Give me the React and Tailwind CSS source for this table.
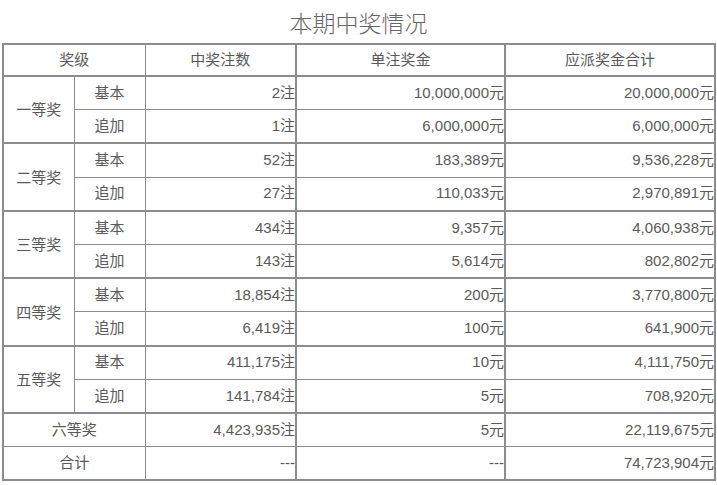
import React from "react";

const groups = [
  { name: "一等奖", rows: [["基本", "2注", "10,000,000元", "20,000,000元"], ["追加", "1注", "6,000,000元", "6,000,000元"]] },
  { name: "二等奖", rows: [["基本", "52注", "183,389元", "9,536,228元"], ["追加", "27注", "110,033元", "2,970,891元"]] },
  { name: "三等奖", rows: [["基本", "434注", "9,357元", "4,060,938元"], ["追加", "143注", "5,614元", "802,802元"]] },
  { name: "四等奖", rows: [["基本", "18,854注", "200元", "3,770,800元"], ["追加", "6,419注", "100元", "641,900元"]] },
  { name: "五等奖", rows: [["基本", "411,175注", "10元", "4,111,750元"], ["追加", "141,784注", "5元", "708,920元"]] },
];

const bc = "border-[#8c8c8c]";

export default function App() {
  return (
    <div className="w-[717px] h-[485px] bg-white overflow-hidden font-['Liberation_Sans','Noto_Sans_CJK_SC',sans-serif] text-[#5a5a5a] text-[15px]">
      <div className="h-[43px] flex items-center justify-center text-[23px] text-[#666] font-['Noto_Sans_CJK_SC',sans-serif] font-light pt-[2px]">
        本期中奖情况
      </div>
      <table className={`ml-[2px] w-[712px] border-collapse border-2 ${bc} table-fixed`}>
        <colgroup>
          <col className="w-[71px]" />
          <col className="w-[71px]" />
          <col className="w-[151px]" />
          <col className="w-[209px]" />
          <col className="w-[210px]" />
        </colgroup>
        <thead>
          <tr className="h-[32px]">
            <th colSpan={2} className={`font-normal border ${bc} border-b-2 text-center p-0`}>奖级</th>
            <th className={`font-normal border ${bc} border-b-2 text-center p-0`}>中奖注数</th>
            <th className={`font-normal border ${bc} border-b-2 border-l-2 text-center p-0`}>单注奖金</th>
            <th className={`font-normal border ${bc} border-b-2 border-l-2 text-center p-0`}>应派奖金合计</th>
          </tr>
        </thead>
        <tbody>
          {groups.map((g) =>
            g.rows.map((r, i) => (
              <tr key={g.name + i} className={`h-[33.7px] ${i === 1 ? "border-b-2 " + bc : ""}`}>
                {i === 0 && (
                  <td rowSpan={2} className={`border ${bc} border-b-2 text-center p-0 pt-[2px]`}>{g.name}</td>
                )}
                <td className={`border ${bc} text-center p-0`}>{r[0]}</td>
                <td className={`border ${bc} text-right p-0`}>{r[1]}</td>
                <td className={`border ${bc} border-l-2 text-right p-0`}>{r[2]}</td>
                <td className={`border ${bc} border-l-2 text-right p-0`}>{r[3]}</td>
              </tr>
            ))
          )}
          <tr className="h-[33.7px]">
            <td colSpan={2} className={`border ${bc} text-center p-0`}>六等奖</td>
            <td className={`border ${bc} text-right p-0`}>4,423,935注</td>
            <td className={`border ${bc} border-l-2 text-right p-0`}>5元</td>
            <td className={`border ${bc} border-l-2 text-right p-0`}>22,119,675元</td>
          </tr>
          <tr className="h-[33.7px]">
            <td colSpan={2} className={`border ${bc} text-center p-0`}>合计</td>
            <td className={`border ${bc} text-right p-0`}>---</td>
            <td className={`border ${bc} border-l-2 text-right p-0`}>---</td>
            <td className={`border ${bc} border-l-2 text-right p-0`}>74,723,904元</td>
          </tr>
        </tbody>
      </table>
    </div>
  );
}
